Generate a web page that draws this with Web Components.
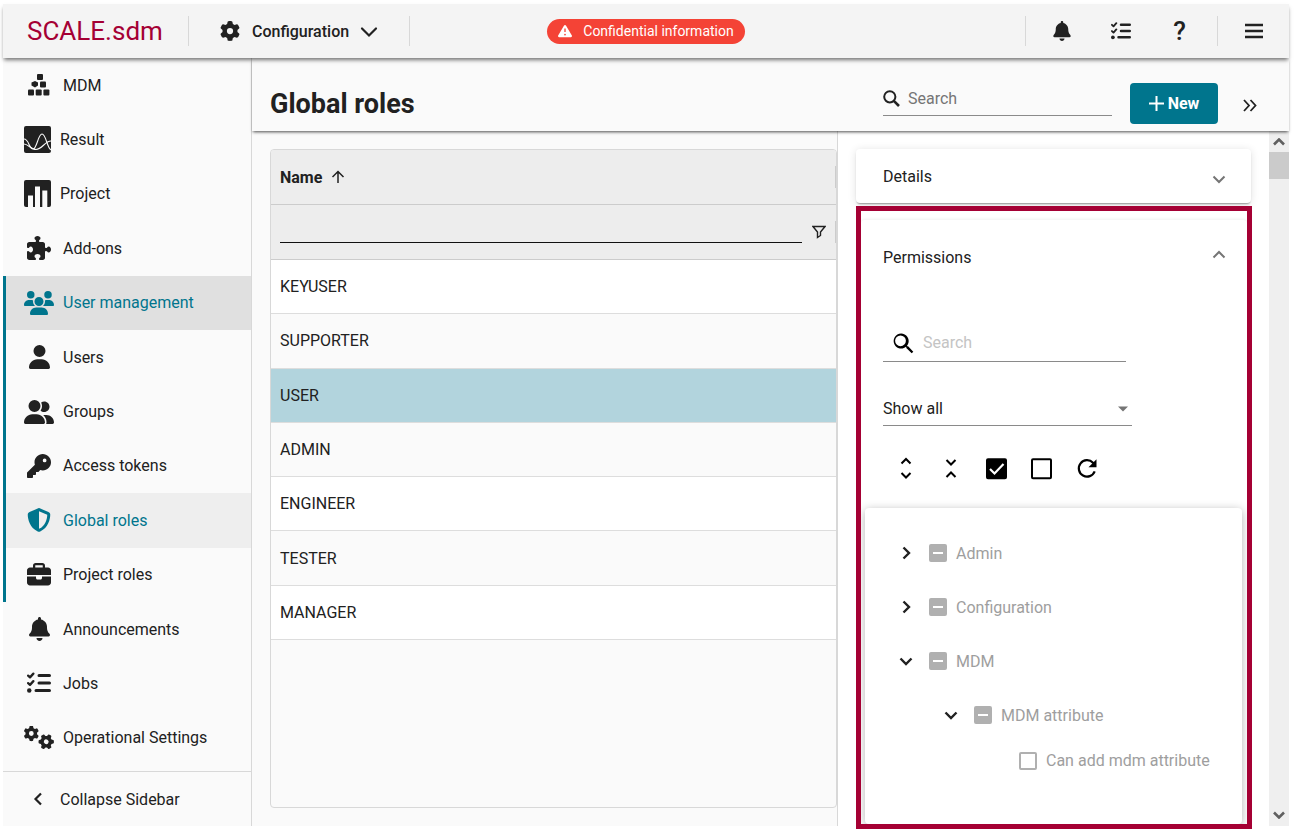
<!DOCTYPE html>
<html lang="en">
<head>
<meta charset="utf-8">
<title>SCALE.sdm - Global roles</title>
<style>
  :root {
    --primary: #00758d;
    --brand: #a50034;
    --text: #212121;
    --muted: #9e9e9e;
    --line: #d8d8d8;
    --surface: #fafafa;
  }
  body {
    margin: 0;
    background: #fff;
    color: var(--text);
    font: 16px/21px Roboto, "Liberation Sans", sans-serif;
  }
</style>
</head>
<body>
<sdm-app>
  <sdm-topbar slot="top"></sdm-topbar>
  <sdm-sidebar slot="side">
    <sdm-nav-item icon="mdm">MDM</sdm-nav-item>
    <sdm-nav-item icon="result" compact>Result</sdm-nav-item>
    <sdm-nav-item icon="project" compact>Project</sdm-nav-item>
    <sdm-nav-item icon="puzzle">Add-ons</sdm-nav-item>
    <sdm-nav-item icon="users" group open>User management</sdm-nav-item>
    <sdm-nav-item icon="user" group>Users</sdm-nav-item>
    <sdm-nav-item icon="usergroup" group>Groups</sdm-nav-item>
    <sdm-nav-item icon="key" group>Access tokens</sdm-nav-item>
    <sdm-nav-item icon="shield" group active>Global roles</sdm-nav-item>
    <sdm-nav-item icon="briefcase" group>Project roles</sdm-nav-item>
    <sdm-nav-item icon="bell">Announcements</sdm-nav-item>
    <sdm-nav-item icon="tasks">Jobs</sdm-nav-item>
    <sdm-nav-item icon="gears">Operational Settings</sdm-nav-item>
  </sdm-sidebar>
  <sdm-page-header>Global roles</sdm-page-header>
  <sdm-split>
    <sdm-role-grid slot="list" rows="KEYUSER,SUPPORTER,USER,ADMIN,ENGINEER,TESTER,MANAGER" selected="USER"></sdm-role-grid>
    <sdm-panel>Details</sdm-panel>
    <sdm-highlight>
      <sdm-panel open>Permissions
        <sdm-permissions slot="content"></sdm-permissions>
      </sdm-panel>
    </sdm-highlight>
  </sdm-split>
</sdm-app>

<script>
const GEAR = 'M495.9 166.6c3.2 8.7 .5 18.4-6.4 24.6l-43.3 39.4c1.1 8.3 1.7 16.8 1.7 25.4s-.6 17.1-1.7 25.4l43.3 39.4c6.9 6.2 9.6 15.9 6.4 24.6c-4.4 11.9-9.7 23.3-15.8 34.3l-4.7 8.1c-6.6 11-14 21.4-22.1 31.2c-5.9 7.2-15.7 9.6-24.5 6.8l-55.7-17.7c-13.4 10.3-28.2 18.9-44 25.4l-12.5 57.1c-2 9.1-9 16.3-18.2 17.8c-13.8 2.3-28 3.5-42.5 3.5s-28.7-1.2-42.5-3.5c-9.2-1.5-16.2-8.7-18.2-17.8l-12.5-57.1c-15.8-6.5-30.6-15.1-44-25.4L83.1 425.9c-8.8 2.8-18.6 .3-24.5-6.8c-8.1-9.8-15.5-20.2-22.1-31.2l-4.7-8.1c-6.1-11-11.4-22.4-15.8-34.3c-3.2-8.7-.5-18.4 6.4-24.6l43.3-39.4C64.6 273.1 64 264.6 64 256s.6-17.1 1.7-25.4L22.4 191.2c-6.9-6.2-9.6-15.9-6.4-24.6c4.4-11.9 9.7-23.3 15.8-34.3l4.7-8.1c6.6-11 14-21.4 22.1-31.2c5.9-7.2 15.7-9.6 24.5-6.8l55.7 17.7c13.4-10.3 28.2-18.9 44-25.4l12.5-57.1c2-9.1 9-16.3 18.2-17.8C227.3 1.2 241.5 0 256 0s28.7 1.2 42.5 3.5c9.2 1.5 16.2 8.7 18.2 17.8l12.5 57.1c15.8 6.5 30.6 15.1 44 25.4l55.7-17.7c8.8-2.8 18.6-.3 24.5 6.8c8.1 9.8 15.5 20.2 22.1 31.2l4.7 8.1c6.1 11 11.4 22.4 15.8 34.3zM256 336a80 80 0 1 0 0-160 80 80 0 1 0 0 160z';

// name: [width, height, viewBox, markup]
const ICONS = {
  mdm: [22, 22, '0 0 22 22', '<rect x="9" y="0" width="6" height="6" rx="1"/><path d="M7 7l3 1.500v3L7 13.500l-3.500-2v-3z"/><rect x="12" y="7.500" width="6" height="6" rx="1"/><rect x="0" y="15.500" width="6" height="6" rx="1"/><rect x="7.700" y="15.500" width="6" height="6" rx="1"/><rect x="15.400" y="15.500" width="6" height="6" rx="1"/>'],
  result: [27, 27, '0 0 27 27', '<rect width="27" height="27" rx="2"/><path d="M0 13C5 13 5 23 9 23C13 23 14 8 18 8C22 8 23 22 27 24" fill="none" stroke="#fafafa" stroke-width="1.100"/><path d="M0 18C4 18 7 23.500 12 23.500C18 23.500 21 15 27 15" fill="none" stroke="#fafafa" stroke-width="1.100"/>'],
  project: [27, 27, '0 0 27 27', '<rect width="27" height="27" rx="2"/><path d="M4 15.500h5V27H4zM11 6.500h5V27h-5zM18.300 10.500h5V27h-5z" fill="#fafafa"/>'],
  puzzle: [24, 24, '0 0 512 512', '<path d="M192 104.8c0-9.2-5.8-17.3-13.2-22.8C167.2 73.3 160 61.3 160 48c0-26.5 28.7-48 64-48s64 21.5 64 48c0 13.3-7.2 25.3-18.8 34c-7.4 5.5-13.2 13.6-13.2 22.8c0 12.8 10.4 23.2 23.2 23.2H336c26.5 0 48 21.500 48 48v56.8c0 12.8 10.4 23.2 23.2 23.2c9.2 0 17.3-5.8 22.8-13.2c8.7-11.6 20.7-18.8 34-18.8c26.5 0 48 28.7 48 64s-21.5 64-48 64c-13.3 0-25.3-7.2-34-18.800c-5.500-7.400-13.600-13.200-22.800-13.200c-12.800 0-23.200 10.400-23.200 23.200V464c0 26.500-21.500 48-48 48H279.2c-12.800 0-23.200-10.400-23.200-23.200c0-9.2 5.800-17.300 13.200-22.800c11.600-8.700 18.800-20.700 18.800-34c0-26.500-28.700-48-64-48s-64 21.500-64 48c0 13.300 7.2 25.3 18.8 34c7.4 5.5 13.2 13.6 13.2 22.8c0 12.8-10.4 23.2-23.2 23.2H48c-26.500 0-48-21.500-48-48V343.2C0 330.4 10.4 320 23.2 320c9.2 0 17.300 5.800 22.800 13.200C54.700 344.800 66.700 352 80 352c26.500 0 48-28.700 48-64s-21.500-64-48-64c-13.300 0-25.300 7.200-34 18.800C40.500 250.2 32.400 256 23.200 256C10.400 256 0 245.600 0 232.800V176c0-26.500 21.500-48 48-48H168.800c12.800 0 23.200-10.400 23.200-23.200z"/>'],
  users: [30, 24, '0 0 640 512', '<path d="M144 0a80 80 0 1 1 0 160A80 80 0 1 1 144 0zM512 0a80 80 0 1 1 0 160A80 80 0 1 1 512 0zM0 298.7C0 239.8 47.8 192 106.7 192h42.7c15.9 0 31 3.5 44.6 9.7c-1.3 7.2-1.9 14.7-1.9 22.3c0 38.2 16.8 72.5 43.3 96H21.3C9.6 320 0 310.4 0 298.7zM405.3 320c26-23.500 42.600-57.800 42.600-96c0-7.6-.7-15-1.9-22.3c13.6-6.3 28.7-9.7 44.6-9.7h42.7C592.2 192 640 239.8 640 298.7c0 11.8-9.6 21.3-21.3 21.3H405.3zM224 224a96 96 0 1 1 192 0 96 96 0 1 1-192 0zM128 485.3C128 411.7 187.7 352 261.3 352H378.7C452.3 352 512 411.7 512 485.3c0 14.7-11.9 26.7-26.7 26.7H154.7c-14.7 0-26.7-11.9-26.7-26.7z"/>'],
  user: [21, 24, '0 0 448 512', '<path d="M224 256A128 128 0 1 0 224 0a128 128 0 1 0 0 256zm-45.7 48C79.8 304 0 383.8 0 482.3C0 498.7 13.3 512 29.7 512H418.3c16.4 0 29.7-13.3 29.7-29.7C448 383.8 368.2 304 269.7 304H178.3z"/>'],
  usergroup: [30, 24, '0 0 640 512', '<path d="M96 128a128 128 0 1 1 256 0A128 128 0 1 1 96 128zM0 482.3C0 383.8 79.8 304 178.3 304h91.4C368.2 304 448 383.8 448 482.3c0 16.4-13.3 29.7-29.7 29.7H29.7C13.3 512 0 498.7 0 482.3zM609.3 512H471.4c5.4-9.4 8.6-20.3 8.6-32v-8c0-60.7-27.1-115.2-69.8-151.8c2.4-.1 4.7-.2 7.1-.2h61.4C567.8 320 640 392.2 640 481.3c0 17-13.8 30.7-30.7 30.7zM432 256c-31 0-59-12.6-79.3-32.9C372.4 196.5 384 163.6 384 128c0-26.8-6.6-52.1-18.3-74.3C384.3 40.1 407.2 32 432 32c61.9 0 112 50.1 112 112s-50.1 112-112 112z"/>'],
  key: [24, 24, '0 0 512 512', '<path d="M336 352c97.2 0 176-78.8 176-176S433.2 0 336 0S160 78.8 160 176c0 18.7 2.9 36.8 8.3 53.7L7 391c-4.5 4.5-7 10.6-7 17v80c0 13.3 10.7 24 24 24h80c13.3 0 24-10.7 24-24V448h40c13.3 0 24-10.7 24-24V384h40c6.4 0 12.5-2.5 17-7l33.3-33.3c16.9 5.4 35 8.3 53.7 8.3zM376 96a40 40 0 1 1 0 80 40 40 0 1 1 0-80z"/>'],
  shield: [24, 24, '0 0 512 512', '<path d="M256 0c4.6 0 9.2 1 13.4 2.9L457.7 82.8c22 9.3 38.4 31 38.3 57.2c-.5 99.2-41.3 280.7-213.6 363.2c-16.7 8-36.1 8-52.8 0C57.3 420.7 16.5 239.2 16 140c-.1-26.2 16.3-47.9 38.3-57.2L242.7 2.9C246.8 1 251.4 0 256 0zm0 66.8V444.8C394 378 431.1 230.1 432 141.4L256 66.8z"/>'],
  briefcase: [24, 24, '0 0 512 512', '<path d="M184 48H328c4.4 0 8 3.6 8 8V96H176V56c0-4.4 3.6-8 8-8zm-56 8V96H64C28.7 96 0 124.7 0 160v96H192 320 512V160c0-35.3-28.7-64-64-64H384V56c0-30.900-25.100-56-56-56H184c-30.900 0-56 25.100-56 56zM512 288H320v32c0 17.700-14.300 32-32 32H224c-17.700 0-32-14.300-32-32V288H0V416c0 35.300 28.700 64 64 64H448c35.300 0 64-28.700 64-64V288z"/>'],
  bell: [21, 24, '0 0 448 512', '<path d="M224 0c-17.7 0-32 14.3-32 32V51.2C119 66 64 130.6 64 208v18.8c0 47-17.3 92.4-48.5 127.6l-7.4 8.3c-8.4 9.4-10.4 22.9-5.3 34.4S19.4 416 32 416H416c12.6 0 24-7.4 29.2-18.9s3.1-25-5.3-34.4l-7.4-8.3C401.3 319.2 384 273.9 384 226.8V208c0-77.4-55-142-128-156.8V32c0-17.7-14.3-32-32-32zm45.3 493.3c12-12 18.7-28.3 18.7-45.3H160c0 17 6.7 33.3 18.7 45.3s28.3 18.7 45.3 18.7s33.3-6.7 45.3-18.7z"/>'],
  tasks: [24, 24, '0 0 512 512', '<g fill="none" stroke="currentColor" stroke-linecap="round" stroke-linejoin="round"><path stroke-width="64" d="M256 96H480M256 256H480M192 416H480"/><path stroke-width="48" d="M24 98l40 38 72-80M24 258l40 38 72-80"/></g><circle cx="48" cy="416" r="48"/>'],
  gears: [30, 24, '0 0 640 512', `<path transform="translate(-8 -4) scale(.64)" d="${GEAR}"/><path transform="translate(474 336) rotate(30) scale(.64) translate(-256 -256)" d="${GEAR}"/>`],
  gear: [20, 20, '0 0 512 512', `<path d="${GEAR}"/>`],
  menu: [18, 18, '0 0 18 18', '<path d="M0 3h18M0 9h18M0 15h18" stroke="currentColor" stroke-width="2.400"/>'],
  warning: [14, 14, '0 0 512 512', '<path fill-rule="evenodd" d="M256 32c14.200 0 27.300 7.500 34.500 19.800l216 368c7.300 12.400 7.300 27.700 .2 40.100S486.300 480 472 480H40c-14.300 0-27.600-7.700-34.700-20.100s-7-27.800 .2-40.100l216-368C228.700 39.500 241.800 32 256 32zM232 160V296h48V160zM224 384a32 32 0 1 0 64 0 32 32 0 1 0-64 0z"/>'],
  down: [18, 18, '0 0 18 18', '<path d="M2 6.500l7 7 7-7" fill="none" stroke="currentColor" stroke-width="2.200" stroke-linecap="round"/>'],
  search: [17, 17, '0 0 17 17', '<circle cx="6.800" cy="6.800" r="5.600" fill="none" stroke="currentColor" stroke-width="2"/><path d="M10.800 10.800l5.200 5.200" stroke="currentColor" stroke-width="2.600"/>'],
  lens: [24, 24, '0 0 24 24', '<path d="M17.100 16.200h-.9l-.3-.3a7.500 7.500 0 1 0-.9.900l.3.300v.9l5.400 5.300 1.600-1.600zM9.500 16.200a5.400 5.400 0 1 1 0-10.800 5.400 5.400 0 0 1 0 10.800z"/>'],
  plus: [15, 15, '0 0 15 15', '<path d="M7.500 0v15M0 7.500h15" stroke="currentColor" stroke-width="2"/>'],
  more: [16, 16, '0 0 16 16', '<path d="M2 4l5 5.500-5 5.500M8.500 4l5 5.500-5 5.500" fill="none" stroke="currentColor" stroke-width="1.800"/>'],
  left: [14, 14, '0 0 14 14', '<path d="M10 1.500L4.500 7l5.500 5.500" fill="none" stroke="currentColor" stroke-width="2.200"/>'],
  sort: [14, 14, '0 0 14 14', '<path d="M7 13V1.500M1.500 7L7 1.500 12.500 7" fill="none" stroke="currentColor" stroke-width="1.500"/>'],
  funnel: [14, 14, '0 0 14 14', '<path d="M1 1.500h12L8.500 7v3.500l-3 2V7z" fill="none" stroke="currentColor" stroke-width="1.400"/>'],
  // sits low in its box, so the flipped one sits high
  expand: [24, 24, '0 0 24 24', '<path d="M6.500 12.500l5.500 5.500 5.500-5.500" fill="none" stroke="currentColor" stroke-width="2"/>'],
  unfold: [24, 24, '0 0 24 24', '<path d="M7.500 7.500L12 3l4.500 4.500M7.500 17L12 21.500l4.500-4.500" fill="none" stroke="currentColor" stroke-width="2"/>'],
  fold: [24, 24, '0 0 24 24', '<path d="M7.500 4L12 8.500l4.500-4.500M7.500 21L12 16.500l4.500 4.500" fill="none" stroke="currentColor" stroke-width="2"/>'],
  checked: [24, 24, '0 0 24 24', '<path d="M4 2.300h17a2 2 0 0 1 2 2v17a2 2 0 0 1-2 2h-17a2 2 0 0 1-2-2v-17a2 2 0 0 1 2-2z"/><path d="M6 13l4.500 4.500L19.500 8" fill="none" stroke="#fff" stroke-width="2.200"/>'],
  unchecked: [24, 24, '0 0 24 24', '<rect x="3" y="3.300" width="19" height="19" rx="1" fill="none" stroke="currentColor" stroke-width="2"/>'],
  reload: [24, 24, '0 0 24 24', '<path d="M20.700 15.300A8.200 8.200 0 1 1 19 6.800L21 9" fill="none" stroke="currentColor" stroke-width="2.200"/><path d="M22.500 3.300v8h-8z"/>'],
  caret: [10, 6, '0 0 10 6', '<path d="M0 .5h10L5 5.500z"/>'],
  twist: [14, 14, '0 0 14 14', '<path d="M4.500 1.500L10 7l-5.500 5.500" fill="none" stroke="currentColor" stroke-width="2.400"/>'],
  scroll: [12, 8, '0 0 12 8', '<path d="M1 6.500l5-5 5 5" fill="none" stroke="#606060" stroke-width="2.600"/>'],
};

class SdmBase extends HTMLElement {
  constructor() {
    super();
    this.attachShadow({ mode: 'open' });
  }
  connectedCallback() {
    const template = document.createElement('template');
    template.innerHTML = `
      <style>
        *, :host { box-sizing: border-box; }
        a { color: inherit; text-decoration: none; }
        button, input, select { font: inherit; color: inherit; background: none; border: 0; padding: 0; margin: 0; outline: 0; border-radius: 0; }
        button { display: flex; align-items: center; justify-content: center; cursor: pointer; }
        ${this.styles()}
      </style>
      ${this.markup()}`;
    this.shadowRoot.replaceChildren(template.content.cloneNode(true));
    this.ready();
  }
  ready() {}
}

class SdmIcon extends SdmBase {
  styles() {
    return `
      :host { display: inline-flex; flex: none; }
      svg { display: block; fill: currentColor; }`;
  }
  markup() {
    const [w, h, box, body] = ICONS[this.getAttribute('name')];
    const size = Number(this.getAttribute('height')) || h;
    return `<svg width="${Math.round(w * size / h)}" height="${size}" viewBox="${box}" aria-hidden="true">${body}</svg>`;
  }
}

class SdmApp extends SdmBase {
  styles() {
    return `
      :host {
        display: grid;
        grid-template: auto minmax(0, 1fr) / 249px minmax(0, 1fr);
        height: 100vh;
        padding: 4px 6px 10px 3px;
      }
      .top { grid-column: 1 / -1; z-index: 2; }
      .side { display: grid; }
      main { display: flex; flex-direction: column; min-width: 0; min-height: 0; }`;
  }
  markup() {
    return `
      <div class="top"><slot name="top"></slot></div>
      <div class="side"><slot name="side"></slot></div>
      <main><slot></slot></main>`;
  }
}

class SdmTopbar extends SdmBase {
  styles() {
    return `
      :host {
        display: grid;
        grid-template-columns: 1fr auto 1fr;
        align-items: center;
        height: 54px;
        background: #f4f4f4;
        box-shadow: 0 3px 4px -1px rgba(0, 0, 0, .55);
      }
      .left, .right { display: flex; align-items: center; }
      .right { justify-content: flex-end; }
      .logo { width: 160px; padding-left: 24px; color: var(--brand); font-size: 26px; line-height: 30px; }
      hr { width: 1px; height: 30px; margin: 0; border: 0; background: var(--line); }
      .logo + hr { margin-left: 25px; }
      .area { gap: 12px; padding: 0 31px; font-weight: 500; }
      .area span { margin-right: -1px; }
      .badge {
        display: flex;
        align-items: center;
        gap: 11px;
        height: 25px;
        padding: 0 11px;
        border-radius: 13px;
        background: #f44336;
        color: #fff;
        font-size: 14px;
      }
      .tools { display: flex; padding: 0 8px 0 6px; }
      .tools button { width: 59px; height: 30px; }
      .help { font-size: 26px; font-weight: 500; }
      .menu { width: 71px; height: 30px; }`;
  }
  markup() {
    return `
      <div class="left">
        <a class="logo" href="#">SCALE.sdm</a>
        <hr>
        <button class="area"><sdm-icon name="gear"></sdm-icon><span>Configuration</span><sdm-icon name="down"></sdm-icon></button>
        <hr>
      </div>
      <div class="badge"><sdm-icon name="warning"></sdm-icon>Confidential information</div>
      <div class="right">
        <hr>
        <div class="tools">
          <button aria-label="Notifications"><sdm-icon name="bell" height="20"></sdm-icon></button>
          <button aria-label="Jobs"><sdm-icon name="tasks" height="20"></sdm-icon></button>
          <button class="help" aria-label="Help">?</button>
        </div>
        <hr>
        <button class="menu" aria-label="Menu"><sdm-icon name="menu"></sdm-icon></button>
      </div>`;
  }
}

class SdmSidebar extends SdmBase {
  styles() {
    return `
      :host {
        display: flex;
        flex-direction: column;
        min-height: 0;
        background: var(--surface);
        border-right: 1px solid var(--line);
      }
      nav { flex: 1; display: flex; flex-direction: column; padding-bottom: 6px; }
      footer { height: 55px; border-top: 1px solid var(--line); display: flex; }
      button { gap: 9px; padding-left: 21px; }
      .box { width: 27px; display: flex; justify-content: center; }`;
  }
  markup() {
    return `
      <nav><slot></slot></nav>
      <footer><button><span class="box"><sdm-icon name="left"></sdm-icon></span>Collapse Sidebar</button></footer>`;
  }
}

class SdmNavItem extends SdmBase {
  styles() {
    return `
      :host { flex: 1; display: flex; border-left: 3px solid transparent; }
      :host([group]) { border-left-color: var(--primary); }
      :host([open]) { background: #e0e0e0; color: var(--primary); }
      :host([active]) { background: #eee; color: var(--primary); }
      a { flex: 1; display: flex; align-items: center; gap: 9px; padding-left: 18px; }
      .box { width: 30px; display: flex; justify-content: center; }
      :host([compact]) .box { width: 27px; }`;
  }
  markup() {
    return `<a href="#"><span class="box"><sdm-icon name="${this.getAttribute('icon')}"></sdm-icon></span><slot></slot></a>`;
  }
}

class SdmPageHeader extends SdmBase {
  styles() {
    return `
      :host {
        display: flex;
        align-items: center;
        height: 73px;
        padding: 18px 25px 0 18px;
        background: var(--surface);
        box-shadow: 0 2px 3px -1px rgba(0, 0, 0, .7);
        z-index: 1;
      }
      h1 { flex: 1; margin: 0; font-size: 27px; line-height: 30px; font-weight: 700; }
      label { display: flex; align-items: center; gap: 8px; width: 229px; height: 34px; margin-bottom: 9px; border-bottom: 1px solid #8a8a8a; }
      input { flex: 1; min-width: 0; }
      input::placeholder { color: #757575; }
      .new { width: 88px; height: 41px; margin: 0 18px; gap: 4px; border-radius: 4px; background: var(--primary); color: #fff; font-weight: 700; }
      .more { width: 28px; height: 28px; }`;
  }
  markup() {
    return `
      <h1><slot></slot></h1>
      <label><sdm-icon name="search"></sdm-icon><input type="text" placeholder="Search" aria-label="Search"></label>
      <button class="new"><sdm-icon name="plus"></sdm-icon>New</button>
      <button class="more" aria-label="More"><sdm-icon name="more"></sdm-icon></button>`;
  }
}

class SdmSplit extends SdmBase {
  styles() {
    return `
      :host { flex: 1; min-height: 0; display: grid; grid-template-columns: minmax(0, 1fr) 432px 20px; }
      .list { display: grid; padding: 18px 0 18px 18px; background: var(--surface); min-height: 0; }
      .detail { display: flex; flex-direction: column; gap: 3px; min-height: 0; padding: 18px 18px 0 18px; border-left: 1px solid var(--line); background: #fff; }`;
  }
  markup() {
    return `
      <div class="list"><slot name="list"></slot></div>
      <div class="detail"><slot></slot></div>
      <sdm-scrollbar></sdm-scrollbar>`;
  }
}

class SdmScrollbar extends SdmBase {
  styles() {
    return `
      :host { display: flex; flex-direction: column; align-items: center; background: #efefef; }
      button { width: 20px; height: 21px; }
      button:last-child { transform: rotate(180deg); }
      .track { flex: 1; width: 20px; }
      .thumb { height: 27px; background: #cbcbcb; }`;
  }
  markup() {
    return `
      <button aria-label="Scroll up"><sdm-icon name="scroll"></sdm-icon></button>
      <div class="track"><div class="thumb"></div></div>
      <button aria-label="Scroll down"><sdm-icon name="scroll"></sdm-icon></button>`;
  }
}

class SdmRoleGrid extends SdmBase {
  styles() {
    return `
      :host { display: block; min-height: 0; overflow: hidden; border: 1px solid var(--line); border-radius: 4px; }
      table { width: 100%; height: 490px; border-collapse: separate; border-spacing: 0; }
      th, td { text-align: left; padding: 0 9px; border-bottom: 1px solid #ddd; }
      th { height: 55px; background: linear-gradient(#ccc, #ccc) right / 1px 22px no-repeat #ededed; border-color: #ccc; font-weight: 700; }
      th > div { display: flex; align-items: center; gap: 9px; }
      .filter { gap: 10px; padding-right: 1px; }
      .filter input { flex: 1; min-width: 0; height: 22px; border-bottom: 1px solid #111; }
      td { height: 54px; background: #fff; }
      tr:nth-child(even) td { background: var(--surface); }
      tr[aria-selected=true] td { background: #b2d4dd; }`;
  }
  markup() {
    const selected = this.getAttribute('selected');
    const rows = this.getAttribute('rows').split(',').map(name =>
      `<tr aria-selected="${name === selected}"><td>${name}</td></tr>`).join('');
    return `
      <table>
        <thead>
          <tr><th><div>Name <sdm-icon name="sort"></sdm-icon></div></th></tr>
          <tr><th><div class="filter"><input type="text" aria-label="Filter name"><button aria-label="Filter"><sdm-icon name="funnel"></sdm-icon></button></div></th></tr>
        </thead>
        <tbody>${rows}</tbody>
      </table>`;
  }
}

class SdmPanel extends SdmBase {
  styles() {
    return `
      :host { display: block; flex: none; background: #fff; border-radius: 4px; box-shadow: 0 2px 2px -1px rgba(0, 0, 0, .4), 0 1px 8px rgba(0, 0, 0, .12); }
      :host([open]) { flex: 1; display: flex; flex-direction: column; min-height: 0; box-shadow: 0 -1px 3px rgba(0, 0, 0, .06); }
      button { width: 100%; height: 54px; padding: 0 20px 0 27px; justify-content: space-between; }
      :host([open]) button { height: 75px; padding: 0 16px 0 22px; }
      sdm-icon { color: #757575; }
      :host([open]) sdm-icon { transform: rotate(180deg); }`;
  }
  markup() {
    return `
      <button aria-expanded="${this.hasAttribute('open')}"><span><slot></slot></span><sdm-icon name="expand"></sdm-icon></button>
      <slot name="content"></slot>`;
  }
}

// Thick frame that runs a little past the edges of the pane
class SdmHighlight extends SdmBase {
  styles() {
    return `
      :host {
        flex: 1;
        min-height: 0;
        display: flex;
        flex-direction: column;
        margin: 0 -1px -3px 0;
        padding-top: 9px;
        border: 5px solid var(--brand);
        background: #fff;
        overflow: hidden;
        z-index: 1;
      }`;
  }
  markup() {
    return '<slot></slot>';
  }
}

class SdmPermissions extends SdmBase {
  styles() {
    return `
      :host { flex: 1; min-height: 0; display: flex; flex-direction: column; }
      .controls { display: flex; flex-direction: column; gap: 30px; padding: 28px 22px; }
      .search { display: flex; align-items: center; gap: 8px; width: 243px; height: 39px; padding-left: 8px; border-bottom: 1px solid #8a8a8a; color: #000; }
      .search input { flex: 1; min-width: 0; }
      .search input::placeholder { color: #c4c4c4; }
      .select { position: relative; width: 249px; height: 34px; border-bottom: 1px solid #8a8a8a; }
      .select select { width: 100%; height: 100%; appearance: none; }
      .select sdm-icon { position: absolute; right: 4px; top: 14px; color: #757575; pointer-events: none; }
      .buttons { display: flex; gap: 21px; padding-left: 11px; color: #000; }
      .tree { flex: 1; min-height: 0; margin: 0 5px 0 4px; padding-top: 18px; border-radius: 4px; box-shadow: 0 2px 10px rgba(0, 0, 0, .3); background: #fff; }`;
  }
  markup() {
    return `
      <div class="controls">
        <label class="search"><sdm-icon name="lens"></sdm-icon><input type="text" placeholder="Search" aria-label="Search permissions"></label>
        <div class="select"><select aria-label="Show"><option>Show all</option></select><sdm-icon name="caret"></sdm-icon></div>
        <div class="buttons">
          <button aria-label="Expand all"><sdm-icon name="unfold"></sdm-icon></button>
          <button aria-label="Collapse all"><sdm-icon name="fold"></sdm-icon></button>
          <button aria-label="Select all"><sdm-icon name="checked"></sdm-icon></button>
          <button aria-label="Select none"><sdm-icon name="unchecked"></sdm-icon></button>
          <button aria-label="Reload"><sdm-icon name="reload"></sdm-icon></button>
        </div>
      </div>
      <div class="tree">
        <sdm-tree-node label="Admin" branch></sdm-tree-node>
        <sdm-tree-node label="Configuration" branch></sdm-tree-node>
        <sdm-tree-node label="MDM" branch open>
          <sdm-tree-node label="MDM attribute" branch open>
            <sdm-tree-node label="Can add mdm attribute"></sdm-tree-node>
          </sdm-tree-node>
        </sdm-tree-node>
      </div>`;
  }
}

class SdmTreeNode extends SdmBase {
  styles() {
    return `
      :host { display: block; }
      .row { display: flex; align-items: center; height: 37px; padding-left: 29px; }
      :host([branch]) .row { height: 54px; }
      .toggle { width: 24px; height: 24px; margin-right: 11px; }
      :host([open]) .toggle { transform: rotate(90deg); }
      label { display: flex; align-items: center; gap: 9px; color: var(--muted); }
      input { appearance: none; width: 18px; height: 18px; border: 2px solid #b0b0b0; border-radius: 2px; }
      input:indeterminate { background: linear-gradient(#fff, #fff) center / 10px 2px no-repeat #b0b0b0; }
      .children { padding-left: 45px; }`;
  }
  markup() {
    const toggle = this.hasAttribute('branch')
      ? '<button class="toggle" aria-label="Toggle"><sdm-icon name="twist"></sdm-icon></button>'
      : '<span class="toggle"></span>';
    return `
      <div class="row">${toggle}<label><input type="checkbox" disabled>${this.getAttribute('label')}</label></div>
      <div class="children"><slot></slot></div>`;
  }
  ready() {
    this.shadowRoot.querySelector('input').indeterminate = this.hasAttribute('branch');
  }
}

customElements.define('sdm-icon', SdmIcon);
customElements.define('sdm-app', SdmApp);
customElements.define('sdm-topbar', SdmTopbar);
customElements.define('sdm-sidebar', SdmSidebar);
customElements.define('sdm-nav-item', SdmNavItem);
customElements.define('sdm-page-header', SdmPageHeader);
customElements.define('sdm-split', SdmSplit);
customElements.define('sdm-scrollbar', SdmScrollbar);
customElements.define('sdm-role-grid', SdmRoleGrid);
customElements.define('sdm-panel', SdmPanel);
customElements.define('sdm-highlight', SdmHighlight);
customElements.define('sdm-permissions', SdmPermissions);
customElements.define('sdm-tree-node', SdmTreeNode);
</script>
</body>
</html>
